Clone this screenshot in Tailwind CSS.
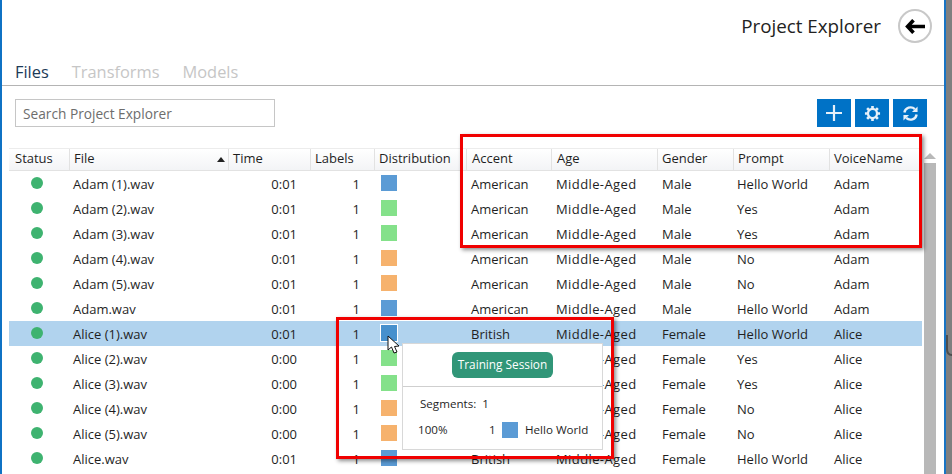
<!DOCTYPE html>
<html lang="en">
<head>
    <title>Project Explorer</title>
    <script src="https://cdn.jsdelivr.net/npm/@tailwindcss/browser@4"></script>
</head>
<body class="bg-white h-[474px] w-[952px] overflow-hidden relative text-[#1f1f1f] font-['Open_Sans','Noto_Sans',sans-serif] text-[13px]">
    <div class="flex h-[474px]">
        <div class="w-[2px] bg-[#0f72c4] shrink-0"></div>
        <main class="w-[942px] shrink-0 flex flex-col">
            <!-- Title -->
            <header class="h-[56px] flex items-center justify-end gap-[17px] pr-[12px] pb-[4px]">
                <span class="text-[18.8px] text-[#222]">Project Explorer</span>
                <div class="w-[34px] h-[34px] rounded-full border-2 border-[#c8c8c8] flex items-center justify-center">
                    <svg width="20" height="15" viewBox="0 0 20 15"><path d="M8.5 1.2 L2.6 7.5 L8.5 13.8 M3 7.5 H20" fill="none" stroke="#000" stroke-width="3.6"/></svg>
                </div>
            </header>

            <!-- Tabs -->
            <nav class="h-[30px] flex items-end gap-[23px] pl-[13px] border-b border-[#b4b4b4] text-[16.4px] leading-[26px]">
                <span class="text-[#1c3a57]">Files</span>
                <span class="text-[#c6c6c6]">Transforms</span>
                <span class="text-[#c6c6c6]">Models</span>
            </nav>

            <!-- Toolbar -->
            <div class="h-[62px] flex items-start justify-between pl-[13px] pr-[17px] pt-[13px] shrink-0">
                <div class="w-[260px] h-[28px] border border-[#c6c6c6] flex items-center pl-[7px] pt-[2px] text-[13.7px] text-[#6d6d6d]">Search Project Explorer</div>
                <div class="flex gap-[4px]">
                    <div class="w-[34px] h-[28px] bg-[#0072c6] flex items-center justify-center">
                        <svg width="18" height="18" viewBox="0 0 18 18"><path d="M9 1 V17 M1 9 H17" stroke="#e6f0f9" stroke-width="2.2"/></svg>
                    </div>
                    <div class="w-[34px] h-[28px] bg-[#0072c6] flex items-center justify-center">
                        <svg width="17" height="17" viewBox="0 0 18 18" fill="none" stroke="#e6f0f9"><circle cx="9" cy="9" r="4.8" stroke-width="2.4"/><path d="M9 1 V4.5 M9 13.5 V17 M1 9 H4.5 M13.5 9 H17 M3.3 3.3 L5.8 5.8 M12.2 12.2 L14.7 14.7 M14.7 3.3 L12.2 5.8 M5.8 12.2 L3.3 14.7" stroke-width="2.8"/></svg>
                    </div>
                    <div class="w-[34px] h-[28px] bg-[#0072c6] flex items-center justify-center">
                        <svg width="17" height="17" viewBox="0 0 18 18"><path d="M2.5 8 A6.6 6.6 0 0 1 13.6 4.4" fill="none" stroke="#e6f0f9" stroke-width="2.5"/><path d="M16.5 1.5 V7.5 H10.5 Z" fill="#e6f0f9"/><path d="M15.5 10 A6.6 6.6 0 0 1 4.4 13.6" fill="none" stroke="#e6f0f9" stroke-width="2.5"/><path d="M1.5 16.5 V10.5 H7.5 Z" fill="#e6f0f9"/></svg>
                    </div>
                </div>
            </div>

            <!-- Table and scrollbar -->
            <div class="flex flex-1 min-h-0 pl-[7px]">
                <div class="w-[913px] shrink-0">
                    <div id="headerRow" class="h-[23px] flex bg-gradient-to-b from-white to-[#f3f4f6] border-y border-[#ececec] border-b-[#e2e2e2]">
                        <div class="w-[61px] pl-[6px] border-r border-[#e2e2e2] leading-[18px]">Status</div>
                        <div class="w-[159px] pl-[4px] border-r border-[#e2e2e2] leading-[18px] flex items-start justify-between pr-[3px]">File <svg class="mt-[8px]" width="8" height="5" viewBox="0 0 8 5"><path d="M0 5 L4 0 L8 5 Z" fill="#222"/></svg></div>
                        <div class="w-[82px] pl-[4px] border-r border-[#e2e2e2] leading-[18px]">Time</div>
                        <div class="w-[64px] pl-[4px] border-r border-[#e2e2e2] leading-[18px]">Labels</div>
                        <div class="w-[92px] pl-[4px] border-r border-[#e2e2e2] leading-[18px]">Distribution</div>
                        <div class="w-[85px] pl-[5px] border-r border-[#e2e2e2] leading-[18px]">Accent</div>
                        <div class="w-[106px] pl-[5px] border-r border-[#e2e2e2] leading-[18px]">Age</div>
                        <div class="w-[76px] pl-[4px] border-r border-[#e2e2e2] leading-[18px]">Gender</div>
                        <div class="w-[96px] pl-[4px] border-r border-[#e2e2e2] leading-[18px]">Prompt</div>
                        <div class="w-[92px] pl-[4px] border-r border-[#e2e2e2] leading-[18px]">VoiceName</div>
                    </div>
                    <div id="rows"></div>
                </div>
                <div class="w-[12px] ml-[2px] flex flex-col items-center">
                    <div class="h-[15px] flex items-center justify-center"><svg width="12" height="6" viewBox="0 0 12 6"><path d="M0 6 L6 0 L12 6 Z" fill="#b8b8b8"/></svg></div>
                    <div class="w-full flex-1 bg-[#b8b8b8]"></div>
                </div>
            </div>
        </main>
        <div class="w-[8px] shrink-0 bg-[#7f7f7f] border-l-[2px] border-[#1874c4] relative">
            <svg class="absolute left-0 top-[335px]" width="6" height="22" viewBox="0 0 6 22"><path d="M1 0 V14 Q1 20 6 20" fill="none" stroke="#4d4d4d" stroke-width="2"/></svg>
        </div>
    </div>

    <!-- Hover popup -->
    <div class="absolute left-[402px] top-[343px] w-[201px] h-[107px] bg-white border border-[#d8d8d8] flex flex-col text-[11.6px]">
        <div class="h-[43px] border-b border-[#cfcfcf] flex items-center justify-center shrink-0">
            <div class="w-[101px] h-[26px] rounded-[6px] bg-[#319678] text-white text-[11.8px] flex items-center justify-center">Training Session</div>
        </div>
        <div class="pl-[17px] flex gap-[6px] h-[34px] items-center"><span>Segments:</span><span>1</span></div>
        <div class="pl-[15px] flex items-center h-[18px]">
            <span class="w-[71px]">100%</span>
            <span class="w-[12px]">1</span>
            <div class="w-[16px] h-[16px] bg-[#5b9bd5] ml-[1px]"></div>
            <span class="ml-[7px]">Hello World</span>
        </div>
    </div>

    <!-- Mouse cursor -->
    <svg class="absolute left-[387px] top-[335px]" width="14" height="20" viewBox="0 0 14 20"><path d="M1 1 V15 L4.5 12 L7 18 L10 17 L7.5 11.5 L12 11 Z" fill="#fff" stroke="#111" stroke-width="1"/></svg>

    <!-- Red annotation boxes -->
    <div class="absolute left-[460px] top-[134px] w-[462px] h-[114px] border-[3px] border-[#f00000] shadow-[2px_2px_4px_rgba(0,0,0,0.45)]"></div>
    <div class="absolute left-[336px] top-[317px] w-[278px] h-[142px] border-[3px] border-[#f00000] shadow-[2px_2px_4px_rgba(0,0,0,0.45)]"></div>

    <script>
        // colours are keyed by the prompt of each file
        const swatch = { 'Hello World': 'bg-[#5b9bd5]', 'Yes': 'bg-[#84e18a]', 'No': 'bg-[#f6b26d]' };
        const files = [
            ['Adam (1).wav', '0:01', 'American', 'Male', 'Hello World', 'Adam'],
            ['Adam (2).wav', '0:01', 'American', 'Male', 'Yes', 'Adam'],
            ['Adam (3).wav', '0:01', 'American', 'Male', 'Yes', 'Adam'],
            ['Adam (4).wav', '0:01', 'American', 'Male', 'No', 'Adam'],
            ['Adam (5).wav', '0:01', 'American', 'Male', 'No', 'Adam'],
            ['Adam.wav', '0:01', 'American', 'Male', 'Hello World', 'Adam'],
            ['Alice (1).wav', '0:01', 'British', 'Female', 'Hello World', 'Alice'],
            ['Alice (2).wav', '0:00', 'British', 'Female', 'Yes', 'Alice'],
            ['Alice (3).wav', '0:00', 'British', 'Female', 'Yes', 'Alice'],
            ['Alice (4).wav', '0:00', 'British', 'Female', 'No', 'Alice'],
            ['Alice (5).wav', '0:00', 'British', 'Female', 'No', 'Alice'],
            ['Alice.wav', '0:01', 'British', 'Female', 'Hello World', 'Alice'],
        ];
        document.getElementById('rows').innerHTML = files.map((f, i) => `
            <div class="h-[25px] flex items-start leading-[26px] ${i === 6 ? 'bg-[#b1d3ee]' : ''}">
                <div class="w-[61px] pl-[22px] pt-[6px]"><div class="w-[12px] h-[12px] rounded-full bg-[#3eb370]"></div></div>
                <div class="w-[159px] pl-[3px]">${f[0]}</div>
                <div class="w-[82px] pr-[14px] text-right">${f[1]}</div>
                <div class="w-[64px] pr-[15px] text-right">1</div>
                <div class="w-[92px] pl-[6px] pt-[4px]"><div class="w-[16px] h-[16px] ${i === 6 ? 'bg-[#4690cd] outline outline-1 outline-white' : swatch[f[4]]}"></div></div>
                <div class="w-[85px] pl-[4px]">${f[2]}</div>
                <div class="w-[106px] pl-[4px] tracking-[0.4px]">Middle-Aged</div>
                <div class="w-[76px] pl-[4px]">${f[3]}</div>
                <div class="w-[96px] pl-[3px]">${f[4]}</div>
                <div class="w-[92px] pl-[4px]">${f[5]}</div>
            </div>`).join('');
    </script>
</body>
</html>
